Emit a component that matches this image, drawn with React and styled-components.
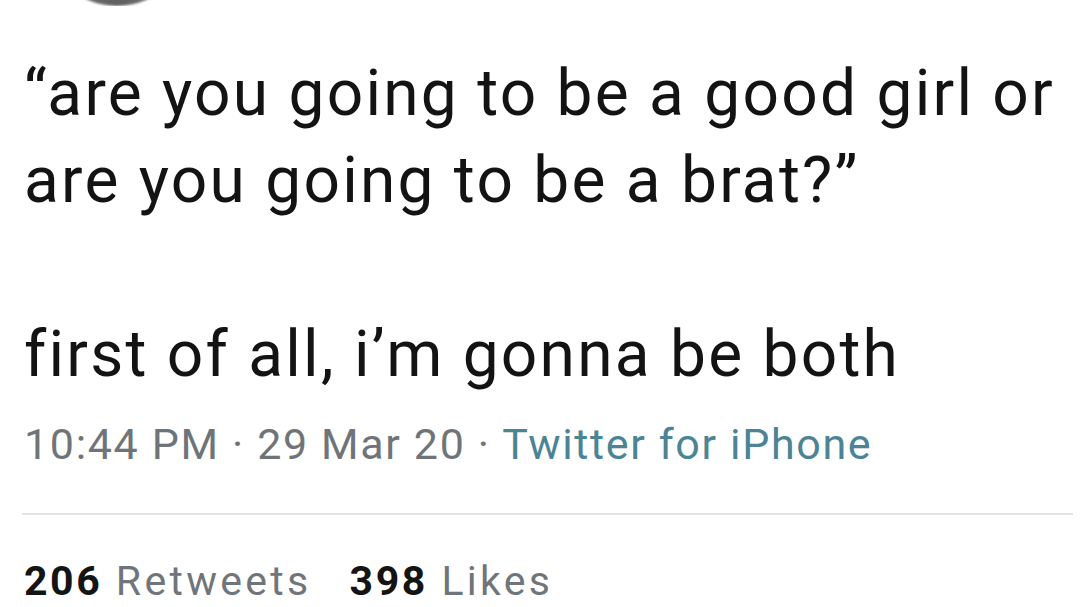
import React from "react";
import styled, { createGlobalStyle } from "styled-components";

const Global = createGlobalStyle`
  html, body { margin: 0; padding: 0; background: #ffffff; }
  body { font-family: Roboto, "Noto Sans", "Liberation Sans", sans-serif; }
`;

const Page = styled.div`
  width: 1080px;
  height: 607px;
  overflow: hidden;
  background: #ffffff;
  display: flex;
  flex-direction: column;
  padding: 0 7px 0 24px;
  box-sizing: border-box;
`;

const Header = styled.div`
  height: 6px;
  overflow: hidden;
  display: flex;
  align-items: flex-end;
  padding-left: 20px;
`;

const Avatar = styled.div`
  flex-shrink: 0;
  width: 146px;
  height: 146px;
  border-radius: 50%;
  background: radial-gradient(circle at 50% 92%, #5c5c5c 0%, #7a7a7a 30%, #b9b9b9 60%, #e6e6e6 100%);
  filter: blur(1px);
`;

const TweetText = styled.div`
  margin-top: 44px;
  font-size: 64px;
  line-height: 87px;
  color: #131313;
  letter-spacing: 2.25px;
`;

const Line = styled.div`
  white-space: nowrap;
  min-height: 87px;
`;

const Meta = styled.div`
  margin-top: 21px;
  font-size: 43px;
  line-height: 50px;
  color: #6f7479;
  letter-spacing: 1.65px;
  white-space: nowrap;
`;

const Source = styled.span`
  color: #4b8494;
`;

const Divider = styled.hr`
  margin: 44px 0 0 -2px;
  border: none;
  height: 2px;
  background: #e2e4e6;
`;

const Stats = styled.div`
  margin-top: 43px;
  display: flex;
  gap: 38px;
  font-size: 41px;
  line-height: 46px;
  letter-spacing: 3.3px;
  white-space: nowrap;
`;

const Stat = styled.span`
  color: #70757b;
`;

const Count = styled.b`
  color: #141414;
  font-weight: 700;
  letter-spacing: 2.6px;
`;

export default function App() {
  return (
    <>
      <Global />
      <Page>
        <Header>
          <Avatar />
        </Header>
        <TweetText>
          <Line>“are you going to be a good girl or</Line>
          <Line>are you going to be a brat?”</Line>
          <Line />
          <Line>first of all, i’m gonna be both</Line>
        </TweetText>
        <Meta>
          10:44 PM · 29 Mar 20 · <Source>Twitter for iPhone</Source>
        </Meta>
        <Divider />
        <Stats>
          <Stat>
            <Count>206</Count> Retweets
          </Stat>
          <Stat>
            <Count>398</Count> Likes
          </Stat>
        </Stats>
      </Page>
    </>
  );
}
